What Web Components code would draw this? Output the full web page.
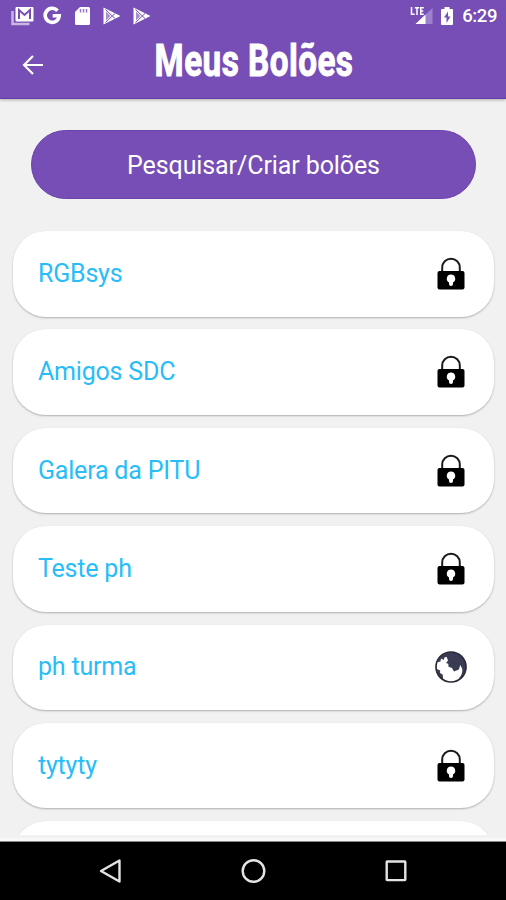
<!DOCTYPE html>
<html lang="pt-BR">
<head>
<meta charset="UTF-8">
<meta name="viewport" content="width=device-width, initial-scale=1">
<title>Meus Bolões</title>
<style>
    html, body { margin: 0; height: 100%; }
    body {
        font-family: Roboto, "Liberation Sans", sans-serif;
        background: #f1f1f1;
        overflow: hidden;
    }
</style>
</head>
<body>
<app-screen>
    <status-bar slot="top" time="6:29"></status-bar>
    <app-header slot="top">Meus Bolões</app-header>
    <pill-button>Pesquisar/Criar bolões</pill-button>
    <pool-list>
        <pool-card>RGBsys</pool-card>
        <pool-card>Amigos SDC</pool-card>
        <pool-card>Galera da PITU</pool-card>
        <pool-card>Teste ph</pool-card>
        <pool-card type="public">ph turma</pool-card>
        <pool-card>tytyty</pool-card>
        <pool-card></pool-card>
    </pool-list>
    <nav-bar slot="bottom"></nav-bar>
</app-screen>

<script>
const ICONS = {
    lock: `
        <svg width="32" height="36" viewBox="0 0 32 36">
            <path d="M7.2 16v-4.500a8.800 8.800 0 0 1 17.600 0V16" fill="none" stroke="#1a1a1a" stroke-width="2"/>
            <rect x="2.500" y="15" width="27" height="18.500" rx="2" fill="#000"/>
            <path d="M16 18.500a4.200 4.200 0 0 0-2 7.900V28a2 2 0 0 0 4 0v-1.600a4.200 4.200 0 0 0-2-7.900z" fill="#fff"/>
        </svg>`,
    globe: `
        <svg width="32" height="36" viewBox="0 0 32 36">
            <circle cx="16" cy="18" r="15" fill="#fff"/>
            <path d="M2.500 13C5 6.500 10 3 16 3c8.300 0 15 6.700 15 15 0 4-1.500 7.500-4 10.200l-3.500 1.300c3-2.500 4-5.500 3.800-9.500l-2-4-1.500 4.500-4.800 2-2-3.500-3.500-1.300-.2-3-2.300-.7 2-2.500-1.300-3.500-2 .3-1.200 2.800-2.500-1.600-.5 3-3 .8z" fill="#3a3c56"/>
            <path d="M2 20l3.200 1.500-.2 2.500 2.700 1.500.5 5.500C4.500 28.500 2 25 2 20z" fill="#3a3c56"/>
            <circle cx="16" cy="18" r="15" fill="none" stroke="#2b2b35" stroke-width="1.700"/>
        </svg>`
};

class AppScreen extends HTMLElement {
    constructor() {
        super();
        this.attachShadow({ mode: 'open' }).innerHTML = `
            <style>
                :host {
                    display: flex;
                    flex-direction: column;
                    height: 900px;
                    width: 506px;
                    background: #f1f1f1;
                }
                .top {
                    background: #764eb5;
                    border-bottom: 1px solid #643da7;
                    box-shadow: 0 1px 3px rgba(0, 0, 0, 0.28);
                }
                main {
                    flex: 1;
                    min-height: 0;
                    overflow: hidden;
                    display: flex;
                    flex-direction: column;
                    padding: 31px 12px 0 13px;
                    gap: 32px;
                    margin-bottom: 6px;
                }
            </style>
            <div class="top"><slot name="top"></slot></div>
            <main><slot></slot></main>
            <slot name="bottom"></slot>
        `;
    }
}

class StatusBar extends HTMLElement {
    connectedCallback() {
        const play = `
            <svg width="18" height="18" viewBox="0 0 18 18">
                <path d="M.5.5L17.500 9 .5 17.500z" fill="#fff"/>
                <path d="M3 4.500v9L7.500 9z" fill="#a88fd2"/>
                <path d="M2.500 2.500l9.500 9M2.500 15.500l9.500-9" stroke="#764eb5" stroke-width="1"/>
            </svg>`;
        this.attachShadow({ mode: 'open' }).innerHTML = `
            <style>
                :host {
                    display: flex;
                    justify-content: space-between;
                    align-items: center;
                    height: 31px;
                    padding: 0 9px 0 11px;
                    color: #fff;
                }
                div { display: flex; align-items: center; }
                .left { gap: 10px; }
                .time { font-size: 18.5px; font-weight: 500; line-height: 31px; letter-spacing: -0.4px; padding-top: 1px; }
                svg { display: block; }
            </style>
            <div class="left">
                <svg width="23" height="20" viewBox="0 0 23 20">
                    <path d="M1.500 5v13h17" fill="none" stroke="#c8b8e1" stroke-width="2.500"/>
                    <rect x="4.500" y="1" width="18" height="14.500" rx="1" fill="#fff"/>
                    <path d="M8 13V4l5.500 5L19 4v9" fill="none" stroke="#764eb5" stroke-width="2"/>
                </svg>
                <svg width="19" height="19" viewBox="0 0 19 19" style="margin-left:-1px">
                    <path d="M14.500 4.700A7 7 0 1 0 16.200 9.800H9.700" fill="none" stroke="#fff" stroke-width="3.600"/>
                </svg>
                <svg width="17" height="20" viewBox="0 0 17 20" style="margin-left:2px">
                    <path d="M6 1h8.500q1.500 0 1.500 1.500v15q0 1.500-1.500 1.500h-12Q1 19 1 17.500V6z" fill="#fff"/>
                    <path d="M6.500 3v3.500M9.500 3v3.500M12.500 3v3.500" stroke="#9677c5" stroke-width="1.500"/>
                </svg>
                <span style="margin-left:2px">${play}</span>
                <span style="margin-left:2px">${play}</span>
            </div>
            <div>
                <svg width="24" height="20" viewBox="0 0 24 20">
                    <path d="M22.500 2v16h-17z" fill="#9e81ce"/>
                    <path d="M15.500 8.500V18h-10z" fill="#fff"/>
                    <path d="M1.500 1v7.200h3.200M4.800 1.800h4.500M7 1.800V9M13.800 1.800h-3v6.400h3M10.800 5h2.500" fill="none" stroke="#fff" stroke-width="1.500"/>
                </svg>
                <svg width="12" height="20" viewBox="0 0 12 20" style="margin: 0 9px 0 7px">
                    <path d="M3.500 1h5v2H11q1 0 1 1v14q0 1-1 1H1q-1 0-1-1V4q0-1 1-1h2.500z" fill="#fff"/>
                    <path d="M7 5.500L3 11.500h2.500V17L9.500 10.500H7z" fill="#764eb5"/>
                </svg>
                <span class="time">${this.getAttribute('time')}</span>
            </div>
        `;
    }
}

class AppHeader extends HTMLElement {
    constructor() {
        super();
        this.attachShadow({ mode: 'open' }).innerHTML = `
            <style>
                :host {
                    display: grid;
                    grid-template-columns: 54px 1fr 54px;
                    align-items: center;
                    height: 67px;
                    color: #fff;
                }
                svg { margin-left: 22px; }
                h1 {
                    margin: 0;
                    font-size: 43.5px;
                    line-height: 67px;
                    font-weight: 700;
                    text-align: center;
                    white-space: nowrap;
                    transform: translate(1px, -3px) scaleX(0.765);
                    -webkit-text-stroke: 1px #fff;
                    letter-spacing: 0.6px;
                }
            </style>
            <svg width="22" height="22" viewBox="0 0 22 22" fill="none" stroke="#fff" stroke-width="2.200">
                <path d="M21 11H3M11 2l-9 9 9 9"/>
            </svg>
            <h1><slot></slot></h1>
        `;
    }
}

class PillButton extends HTMLElement {
    constructor() {
        super();
        this.attachShadow({ mode: 'open' }).innerHTML = `
            <style>
                :host { display: block; padding: 0 18px; flex: none; }
                button {
                    display: block;
                    width: 445px;
                    height: 69px;
                    border: 1px solid #6a42ac;
                    border-radius: 35px;
                    background: #764eb5;
                    color: #fff;
                    font: 400 25px Roboto, sans-serif;
                    letter-spacing: -0.1px;
                    padding: 1px 0 0;
                }
            </style>
            <button><slot></slot></button>
        `;
    }
}

class PoolList extends HTMLElement {
    constructor() {
        super();
        this.attachShadow({ mode: 'open' }).innerHTML = `
            <style>
                :host { display: flex; flex-direction: column; gap: 12.9px; }
            </style>
            <slot></slot>
        `;
    }
}

class PoolCard extends HTMLElement {
    connectedCallback() {
        const icon = this.getAttribute('type') === 'public' ? ICONS.globe : ICONS.lock;
        this.attachShadow({ mode: 'open' }).innerHTML = `
            <style>
                :host {
                    display: flex;
                    flex: none;
                    justify-content: space-between;
                    align-items: center;
                    box-sizing: border-box;
                    height: 85.5px;
                    padding: 0 27px 0 25px;
                    border-radius: 33px;
                    background: #fff;
                    box-shadow: 0 1px 2px rgba(0, 0, 0, 0.28);
                    color: #29bdf8;
                    font-size: 25px;
                    letter-spacing: -0.2px;
                }
                span { padding-bottom: 1px; }
                svg { display: block; }
            </style>
            <span><slot></slot></span>
            ${icon}
        `;
    }
}

class NavBar extends HTMLElement {
    constructor() {
        super();
        this.attachShadow({ mode: 'open' }).innerHTML = `
            <style>
                :host {
                    display: flex;
                    justify-content: center;
                    align-items: center;
                    gap: 118px;
                    height: 58px;
                    background: #000;
                    border-top: 1px solid #888;
                    box-shadow: 0 -3px 0 #f8f8f8;
                }
            </style>
            <svg width="24" height="26" viewBox="0 0 24 26" fill="none" stroke="#e4e4e4" stroke-width="2.400" stroke-linejoin="round">
                <path d="M21.500 2.500v21L3 13z"/>
            </svg>
            <svg width="26" height="26" viewBox="0 0 26 26" fill="none" stroke="#e4e4e4" stroke-width="2.400">
                <circle cx="13.500" cy="13" r="10.800"/>
            </svg>
            <svg width="24" height="26" viewBox="0 0 24 26" fill="none" stroke="#e4e4e4" stroke-width="2.400">
                <rect x="2.700" y="3.500" width="18.600" height="18.600" rx="0.500"/>
            </svg>
        `;
    }
}

customElements.define('app-screen', AppScreen);
customElements.define('status-bar', StatusBar);
customElements.define('app-header', AppHeader);
customElements.define('pill-button', PillButton);
customElements.define('pool-list', PoolList);
customElements.define('pool-card', PoolCard);
customElements.define('nav-bar', NavBar);
</script>
</body>
</html>
